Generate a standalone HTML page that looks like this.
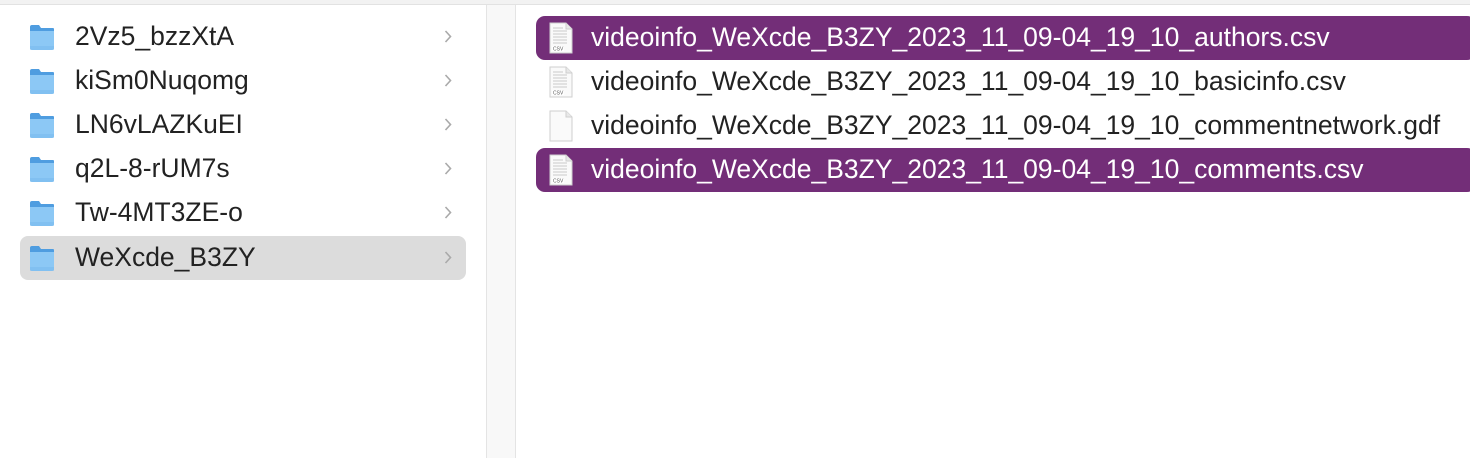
<!DOCTYPE html><html><head><style>
body{margin:0;width:1470px;height:458px;background:#fff;position:relative;overflow:hidden;font-family:"Liberation Sans",Helvetica,sans-serif;font-size:26.5px;color:#222}
.top{position:absolute;left:0;top:0;width:1470px;height:4px;background:#f2f2f2;border-bottom:1px solid #e2e2e2}
.div{position:absolute;left:486px;top:5px;width:28px;height:453px;background:#f8f8f8;border-left:1px solid #e4e4e4;border-right:1px solid #e4e4e4}
.row{position:absolute;height:44px;line-height:43px;white-space:nowrap}
.sel{background:#dcdcdc;border-radius:8px}
.psel{background:#732e78;color:#fff;border-radius:9px}
.fold{position:absolute;top:9px}
.t{position:absolute;left:55px}
.ch{position:absolute;top:15px}
.fi{position:absolute;left:12px;top:6px}
.ft{position:absolute;left:55px}
</style></head><body>
<div class="top"></div><div class="div"></div>
<svg width="0" height="0" style="position:absolute"><defs>
<g id="f"><path d="M1 3 Q1 1 3 1 L10 1 L12 4 L24 4 Q25 4 25 5 L25 24 L1 24 Z" fill="#4f9de0"/><path d="M1 7 L25 7 L25 24 Q25 26 23 26 L3 26 Q1 26 1 24 Z" fill="#8cc8f5"/><path d="M1 23 L25 23 M1 25 L25 25" stroke="#6fb3ea" stroke-width="0.8"/></g>
<g id="c"><path d="M1.5 1 L6.5 6.5 L1.5 12" stroke="#aaa" stroke-width="1.6" fill="none"/></g>
<g id="d"><path d="M2 1 L18 1 L24 7 L24 31 L2 31 Z" fill="#fafafa" stroke="#cfcfcf"/><path d="M18 1 L18 7 L24 7" fill="#e8e8e8" stroke="#cfcfcf"/></g>
<g id="l"><path d="M5 6h10M5 9h14M5 12h14M5 15h14M5 18h14M5 21h14" stroke="#bbb" stroke-width="0.8"/><rect x="4" y="24" width="12" height="5" fill="#fff"/><text x="5" y="28.5" font-size="5" fill="#555" font-family="Liberation Sans">CSV</text></g>
</defs></svg>
<div class="row" style="left:20px;top:15px;width:446px"><svg class="fold" width="26" height="27" style="left:9px"><use href="#f"/></svg><span class="t">2Vz5_bzzXtA</span><svg class="ch" width="9" height="14" style="left:424px"><use href="#c"/></svg></div>
<div class="row" style="left:20px;top:59px;width:446px"><svg class="fold" width="26" height="27" style="left:9px"><use href="#f"/></svg><span class="t">kiSm0Nuqomg</span><svg class="ch" width="9" height="14" style="left:424px"><use href="#c"/></svg></div>
<div class="row" style="left:20px;top:103px;width:446px"><svg class="fold" width="26" height="27" style="left:9px"><use href="#f"/></svg><span class="t">LN6vLAZKuEI</span><svg class="ch" width="9" height="14" style="left:424px"><use href="#c"/></svg></div>
<div class="row" style="left:20px;top:147px;width:446px"><svg class="fold" width="26" height="27" style="left:9px"><use href="#f"/></svg><span class="t">q2L-8-rUM7s</span><svg class="ch" width="9" height="14" style="left:424px"><use href="#c"/></svg></div>
<div class="row" style="left:20px;top:191px;width:446px"><svg class="fold" width="26" height="27" style="left:9px"><use href="#f"/></svg><span class="t">Tw-4MT3ZE-o</span><svg class="ch" width="9" height="14" style="left:424px"><use href="#c"/></svg></div>
<div class="row sel" style="left:20px;top:236px;width:446px"><svg class="fold" width="26" height="27" style="left:9px"><use href="#f"/></svg><span class="t">WeXcde_B3ZY</span><svg class="ch" width="9" height="14" style="left:424px"><use href="#c"/></svg></div>

<div class="row psel" style="left:536px;top:16px;width:940px"><svg class="fi" width="26" height="33"><use href="#d"/><use href="#l"/></svg><span class="ft">videoinfo_WeXcde_B3ZY_2023_11_09-04_19_10_authors.csv</span></div>
<div class="row" style="left:536px;top:60px;width:940px"><svg class="fi" width="26" height="33"><use href="#d"/><use href="#l"/></svg><span class="ft">videoinfo_WeXcde_B3ZY_2023_11_09-04_19_10_basicinfo.csv</span></div>
<div class="row" style="left:536px;top:104px;width:940px"><svg class="fi" width="26" height="33"><use href="#d"/></svg><span class="ft">videoinfo_WeXcde_B3ZY_2023_11_09-04_19_10_commentnetwork.gdf</span></div>
<div class="row psel" style="left:536px;top:148px;width:940px"><svg class="fi" width="26" height="33"><use href="#d"/><use href="#l"/></svg><span class="ft">videoinfo_WeXcde_B3ZY_2023_11_09-04_19_10_comments.csv</span></div>
</body></html>
